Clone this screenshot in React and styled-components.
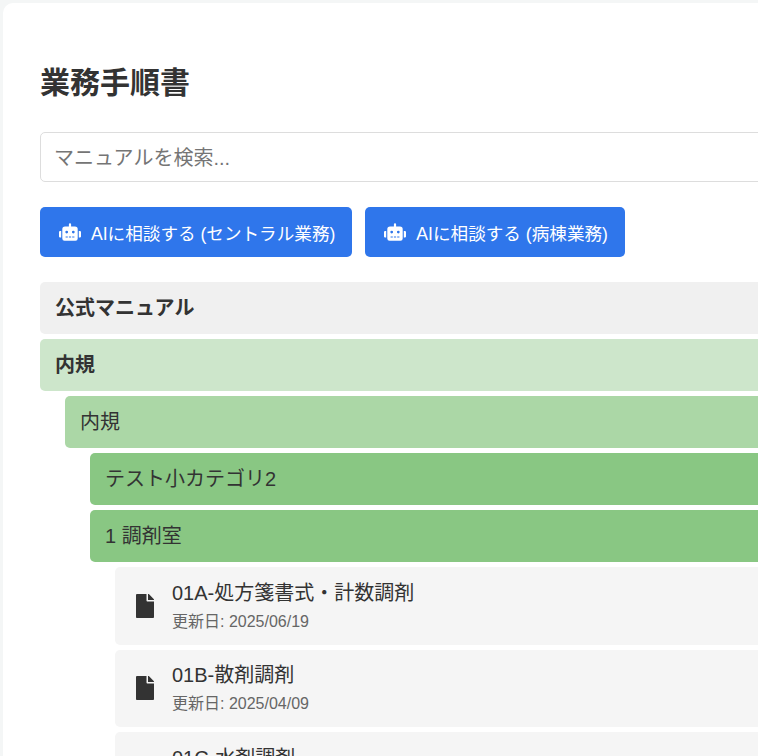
import React from 'react';
import styled, { createGlobalStyle } from 'styled-components';
import { FaRobot, FaFile } from 'react-icons/fa';

const GlobalStyle = createGlobalStyle`
  html, body {
    margin: 0;
    height: 100%;
    overflow: hidden;
    background: #f4f6f6;
  }
  body {
    font-family: "Liberation Sans", "Noto Sans CJK JP", sans-serif;
    color: #333;
  }
`;

const Page = styled.div`
  width: 1000px;
  margin: 3px 0 0 3px;
  padding: 64px 37px 37px;
  background: #fff;
  border-radius: 10px;
  box-sizing: border-box;
`;

const Title = styled.h1`
  margin: 0 0 33px;
  font-size: 30px;
  line-height: 32px;
  font-weight: 700;
  color: #333;
`;

const SearchInput = styled.input`
  display: block;
  width: 100%;
  height: 50px;
  box-sizing: border-box;
  padding: 2px 13px 0;
  margin-bottom: 25px;
  border: 1px solid #ddd;
  border-radius: 5px;
  background: #fff;
  font-family: inherit;
  font-size: 20px;
  color: #333;

  &::placeholder {
    color: #757575;
    opacity: 1;
  }
`;

const ButtonRow = styled.div`
  display: flex;
  gap: 13px;
  margin-bottom: 25px;
`;

const AiButton = styled.button`
  display: flex;
  align-items: center;
  gap: 10px;
  height: 50px;
  padding: 0 17px 0 19px;
  border: 0;
  border-radius: 5px;
  background: #2f76eb;
  color: #fff;
  font-family: inherit;
  font-size: 17.6px;

  svg {
    flex: none;
    width: 22px;
    height: 18px;
  }
`;

const Tree = styled.div`
  display: flex;
  flex-direction: column;
  gap: 5px;
`;

const levelColors = ['#f0f0f0', '#cde6cb', '#abd7a6', '#89c783'];

const CategoryRow = styled.div`
  display: flex;
  align-items: center;
  height: 52px;
  box-sizing: border-box;
  margin-left: ${(p) => p.$indent * 25}px;
  padding: 0 15px 4px;
  border-radius: 5px;
  background: ${(p) => levelColors[p.$level]};
  font-size: 20px;
  font-weight: ${(p) => (p.$bold ? 700 : 400)};
  color: #333;
`;

const ManualItem = styled.div`
  display: flex;
  align-items: center;
  gap: 18px;
  height: 77.5px;
  margin-left: 75px;
  padding: 0 21px;
  border-radius: 5px;
  background: #f5f5f5;
  box-sizing: border-box;

  svg {
    flex: none;
    width: 18px;
    height: 24px;
    color: #333;
  }
`;

const ManualText = styled.div`
  display: flex;
  flex-direction: column;
  gap: 6px;
`;

const ManualName = styled.div`
  font-size: 20px;
  line-height: 26px;
  color: #333;
`;

const ManualDate = styled.div`
  font-size: 16px;
  line-height: 20px;
  color: #666;
`;

const categories = [
  { label: '公式マニュアル', level: 0, indent: 0, bold: true },
  { label: '内規', level: 1, indent: 0, bold: true },
  { label: '内規', level: 2, indent: 1 },
  { label: 'テスト小カテゴリ2', level: 3, indent: 2 },
  { label: '1 調剤室', level: 3, indent: 2 },
];

const manuals = [
  { name: '01A-処方箋書式・計数調剤', date: '更新日: 2025/06/19' },
  { name: '01B-散剤調剤', date: '更新日: 2025/04/09' },
  { name: '01C-水剤調剤', date: '\u00a0' },
];

export default function App() {
  return (
    <>
      <GlobalStyle />
      <Page>
        <Title>業務手順書</Title>
        <SearchInput placeholder='マニュアルを検索...' />
        <ButtonRow>
          <AiButton>
            <FaRobot />
            AIに相談する (セントラル業務)
          </AiButton>
          <AiButton>
            <FaRobot />
            AIに相談する (病棟業務)
          </AiButton>
        </ButtonRow>
        <Tree>
          {categories.map((c, i) => (
            <CategoryRow key={i} $level={c.level} $indent={c.indent} $bold={c.bold}>
              {c.label}
            </CategoryRow>
          ))}
          {manuals.map((m) => (
            <ManualItem key={m.name}>
              <FaFile />
              <ManualText>
                <ManualName>{m.name}</ManualName>
                <ManualDate>{m.date}</ManualDate>
              </ManualText>
            </ManualItem>
          ))}
        </Tree>
      </Page>
    </>
  );
}
